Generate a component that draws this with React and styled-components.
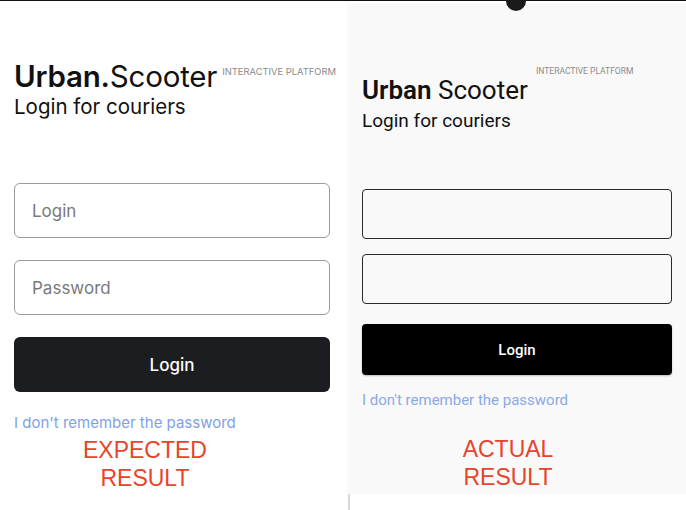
import React from "react";
import styled, { createGlobalStyle } from "styled-components";

const Global = createGlobalStyle`
  html, body { margin: 0; padding: 0; background: #ffffff; }
  body { width: 686px; height: 510px; overflow: hidden; }
  * { box-sizing: border-box; }
`;

const Page = styled.div`
  position: relative;
  width: 686px;
  height: 510px;
  border-top: 1px solid #111;
  display: flex;
  align-items: flex-start;
`;

const Notch = styled.div`
  position: absolute;
  left: 506px;
  top: -10px;
  width: 20px;
  height: 20px;
  border-radius: 50%;
  background: #1a1a1a;
`;

const Divider = styled.div`
  position: absolute;
  left: 348px;
  top: 493px;
  width: 2px;
  height: 17px;
  background: #d9d9d9;
`;

const Panel = styled.section`
  flex: none;
  width: ${(p) => p.$w}px;
  height: ${(p) => p.$h}px;
  margin-top: ${(p) => p.$top}px;
  background: ${(p) => p.$bg};
  padding: ${(p) => p.$pad};
  display: flex;
  flex-direction: column;
  font-family: ${(p) => p.$font};
`;

const Header = styled.div`
  display: flex;
  flex-direction: column;
  color: #111;
`;

const TitleRow = styled.div`
  display: flex;
  align-items: flex-start;
  gap: ${(p) => p.$gap}px;
`;

const Title = styled.h1`
  margin: 0;
  font-size: ${(p) => p.$size}px;
  line-height: 1.1;
  font-weight: 400;
  letter-spacing: ${(p) => p.$ls || 0}px;
  b { font-weight: 600; }
`;

const Tag = styled.span`
  font-size: ${(p) => p.$size}px;
  color: #8a8a8a;
  letter-spacing: 0;
  margin-top: ${(p) => p.$mt}px;
  margin-left: ${(p) => p.$ml || 0}px;
  white-space: nowrap;
`;

const Subtitle = styled.p`
  margin: ${(p) => p.$mt}px 0 0;
  font-size: ${(p) => p.$size}px;
  line-height: 1.2;
  color: #111;
`;

const Form = styled.div`
  display: flex;
  flex-direction: column;
  gap: ${(p) => p.$gap}px;
  margin-top: ${(p) => p.$mt}px;
`;

const Field = styled.div`
  height: ${(p) => p.$h}px;
  width: ${(p) => p.$w}px;
  border: 1px solid ${(p) => p.$border};
  border-radius: ${(p) => p.$r}px;
  background: transparent;
  display: flex;
  align-items: center;
  padding-left: 17px;
  font-size: 17px;
  color: #7a7a7a;
`;

const Button = styled.div`
  height: ${(p) => p.$h}px;
  width: ${(p) => p.$w}px;
  margin-top: ${(p) => p.$mt}px;
  border-radius: ${(p) => p.$r}px;
  background: ${(p) => p.$bg};
  color: #fff;
  display: flex;
  align-items: center;
  justify-content: center;
  font-size: ${(p) => p.$size}px;
  font-weight: 500;
  box-shadow: ${(p) => (p.$shadow ? "0 1px 2px rgba(0,0,0,0.25)" : "none")};
`;

const Link = styled.a`
  margin-top: ${(p) => p.$mt}px;
  font-size: ${(p) => p.$size}px;
  color: ${(p) => p.$color};
  text-decoration: none;
  line-height: 1.2;
`;

const Caption = styled.div`
  margin-top: ${(p) => p.$mt}px;
  width: ${(p) => p.$w}px;
  text-align: center;
  font-family: "Liberation Sans", Arial, sans-serif;
  font-size: 23px;
  line-height: 28px;
  color: #e8432b;
`;

export default function App() {
  return (
    <>
      <Global />
      <Page>
        <Panel
          $w={347}
          $h={508}
          $top={0}
          $bg="#ffffff"
          $pad="59px 12px 0 14px"
          $font={'Inter, "Noto Sans", sans-serif'}
        >
          <Header>
            <TitleRow $gap={5}>
              <Title $size={29.5} $ls={-0.2}>
                <b>Urban.</b>Scooter
              </Title>
              <Tag $size={9.4} $mt={6}>INTERACTIVE PLATFORM</Tag>
            </TitleRow>
            <Subtitle $size={20.5} $mt={3}>Login for couriers</Subtitle>
          </Header>
          <Form $gap={22} $mt={63}>
            <Field $h={55} $w={316} $border="#9a9a9a" $r={6}>Login</Field>
            <Field $h={55} $w={316} $border="#9a9a9a" $r={6}>Password</Field>
          </Form>
          <Button $h={55} $w={316} $mt={22} $r={6} $bg="#1c1d21" $size={17}>
            Login
          </Button>
          <Link $mt={22} $size={15} $color="#7f9fe6" href="#">
            I don't remember the password
          </Link>
          <Caption $mt={4} $w={262}>
            EXPECTED
            <br />
            RESULT
          </Caption>
        </Panel>
        <Panel
          $w={339}
          $h={490}
          $top={3}
          $bg="#f9f9f9"
          $pad="62px 15px 0 15px"
          $font={'Roboto, "Noto Sans", sans-serif'}
        >
          <Header>
            <TitleRow $gap={0}>
              <Tag $size={8.5} $mt={0} $ml={174}>
                INTERACTIVE PLATFORM
              </Tag>
            </TitleRow>
            <Title $size={26}>
              <b>Urban</b> Scooter
            </Title>
            <Subtitle $size={19} $mt={5}>Login for couriers</Subtitle>
          </Header>
          <Form $gap={15} $mt={57}>
            <Field $h={50} $w={310} $border="#2a2a2a" $r={4} />
            <Field $h={50} $w={310} $border="#2a2a2a" $r={4} />
          </Form>
          <Button $h={51} $w={310} $mt={20} $r={4} $bg="#000" $size={15} $shadow>
            Login
          </Button>
          <Link $mt={16} $size={15} $color="#8aa9e8" href="#">
            I don't remember the password
          </Link>
          <Caption $mt={26} $w={292}>
            ACTUAL
            <br />
            RESULT
          </Caption>
        </Panel>
        <Notch />
        <Divider />
      </Page>
    </>
  );
}
